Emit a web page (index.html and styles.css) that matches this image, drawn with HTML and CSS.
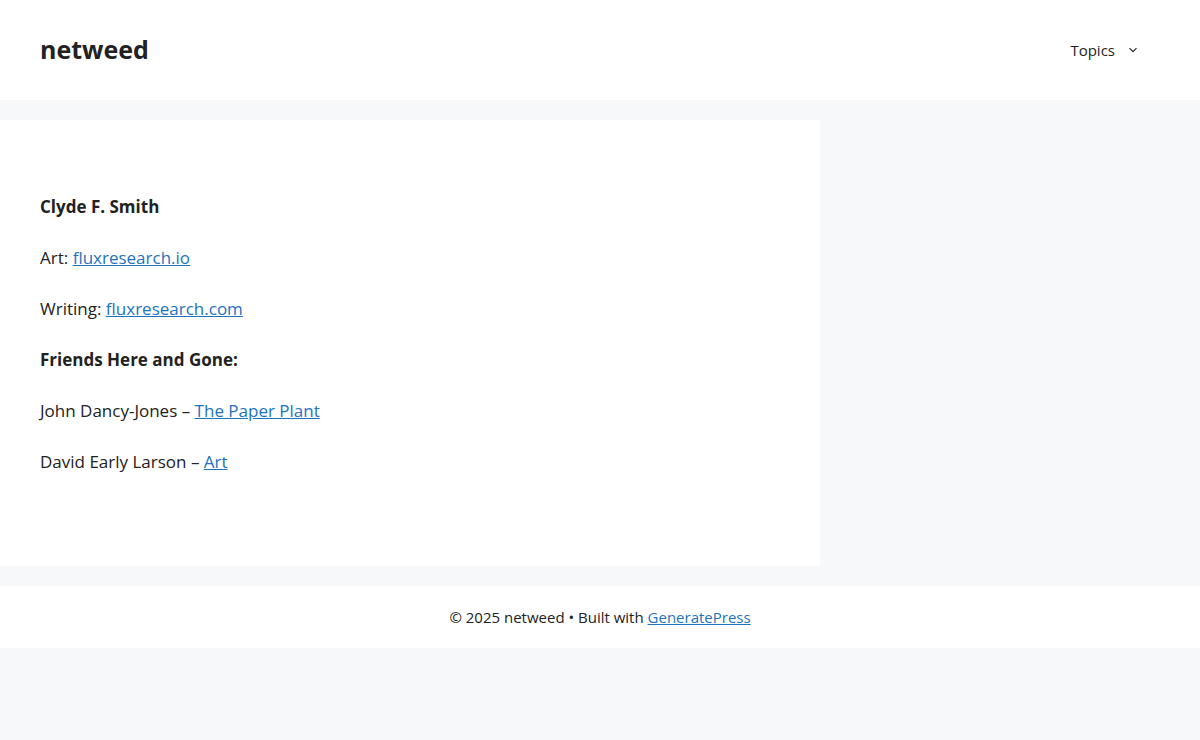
FILE: index.html
```html
<!DOCTYPE html>
<html lang="en">
<head>
  <meta charset="UTF-8">
  <title>netweed</title>
  <link rel="stylesheet" href="styles.css">
</head>
<body>

<header class="site-header">
  <div class="site-branding">netweed</div>
  <nav class="main-nav">
    <a class="menu-item" href="#">Topics
      <svg class="dropdown-arrow" width="10" height="10" viewBox="0 0 10 10"><path d="M1.5 3.2 L5 6.7 L8.5 3.2" fill="none" stroke="#222" stroke-width="1.1"/></svg>
    </a>
  </nav>
</header>

<div class="site-content">
  <main class="content-area">
    <article class="entry-content">
      <p><strong>Clyde F. Smith</strong></p>
      <p>Art: <a href="#">fluxresearch.io</a></p>
      <p>Writing: <a href="#">fluxresearch.com</a></p>
      <p><strong>Friends Here and Gone:</strong></p>
      <p>John Dancy-Jones – <a href="#">The Paper Plant</a></p>
      <p>David Early Larson – <a href="#">Art</a></p>
    </article>
  </main>
  <aside class="sidebar"></aside>
</div>

<footer class="site-footer">
  © 2025 netweed • Built with <a href="#">GeneratePress</a>
</footer>

</body>
</html>
```

FILE: styles.css
```css
body {
  margin: 0;
  background: #f7f8f9;
  color: #222;
  font-family: "Segoe UI", "Open Sans", "Noto Sans", sans-serif;
  font-size: 17px;
  line-height: 1.5;
}
a { color: #1e73be; }

.site-header {
  background: #fff;
  height: 100px;
  padding: 0 40px;
  display: flex;
  align-items: center;
  justify-content: space-between;
}
.site-branding {
  font-size: 25px;
  font-weight: bold;
  line-height: 1.5;
  color: #222;
}
.main-nav { margin-right: 22px; }
.main-nav .menu-item {
  display: flex;
  align-items: center;
  font-size: 15px;
  color: #222;
  text-decoration: none;
  line-height: 60px;
}
.dropdown-arrow { margin-left: 13px; }

.site-content {
  display: flex;
  margin-top: 20px;
}
.content-area {
  width: 820px;
  background: #fff;
}
.entry-content {
  padding: 74px 40px 40px;
}
.entry-content p {
  margin: 0 0 25.5px;
}
.entry-content p:last-child { margin-bottom: 51px; }
.sidebar { flex: 1; }

.site-footer {
  margin-top: 20px;
  background: #fff;
  padding: 20px;
  font-size: 15px;
  line-height: 1.5;
  text-align: center;
}
```
